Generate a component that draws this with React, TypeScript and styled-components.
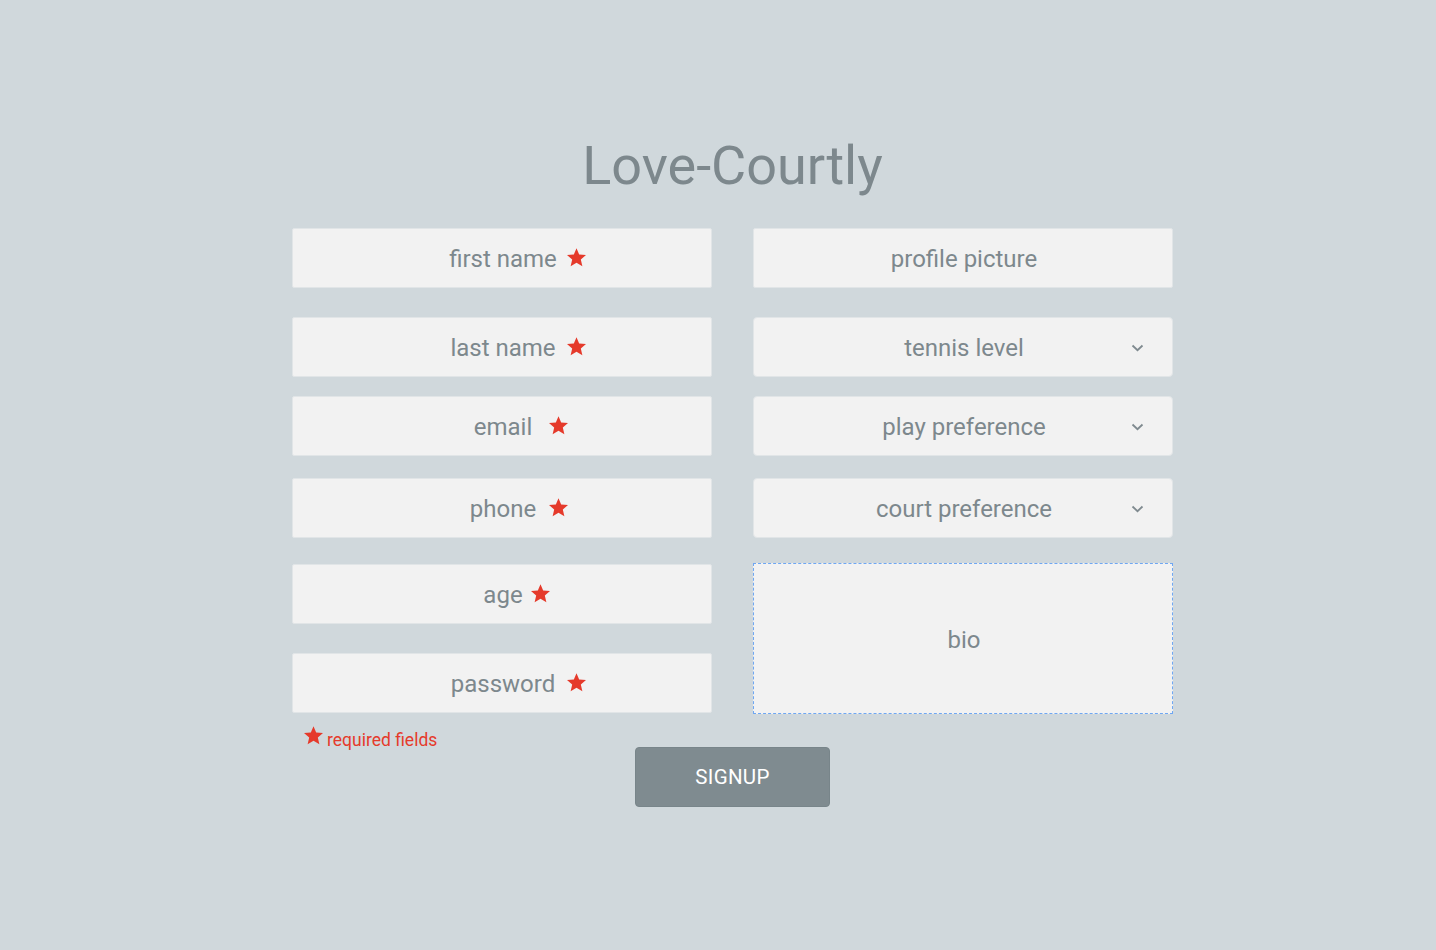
import React from "react";
import styled, { createGlobalStyle } from "styled-components";

const Global = createGlobalStyle`
  html, body { margin: 0; padding: 0; background: #d0d8dc; }
  body { font-family: Roboto, "Liberation Sans", Arial, sans-serif; }
`;

const Page = styled.div`
  min-height: 950px;
  box-sizing: border-box;
  padding: 134px 0 0 29px;
  display: flex;
  flex-direction: column;
  align-items: center;
`;

const Title = styled.h1`
  margin: 0;
  font-family: Roboto, "Liberation Sans", sans-serif;
  font-weight: 400;
  font-size: 54px;
  line-height: 63px;
  color: #7d888d;
`;

const Form = styled.form`
  margin-top: 31px;
  width: 881px;
  display: flex;
  flex-direction: column;
  align-items: center;
`;

const Columns = styled.div`
  width: 100%;
  display: flex;
  gap: 41px;
  align-items: flex-start;
`;

const Column = styled.div`
  width: 420px;
  display: flex;
  flex-direction: column;
`;

const Field = styled.div<{ $top?: number; $round?: number }>`
  position: relative;
  box-sizing: border-box;
  height: 60px;
  margin-top: ${(p) => p.$top ?? 0}px;
  background: #f2f2f2;
  border: 1px solid #e1e5e7;
  border-radius: ${(p) => p.$round ?? 2}px;
  display: flex;
  align-items: center;
  justify-content: center;
  font-size: 24px;
  color: #7d888d;
`;

const Label = styled.span`
  line-height: 28px;
  padding-top: 2px;
  padding-left: 2px;
`;

const Star = styled.svg<{ $x: number }>`
  position: absolute;
  left: ${(p) => p.$x}px;
  top: 19px;
  width: 19px;
  height: 19px;
`;

const Chevron = styled.svg`
  position: absolute;
  right: 28px;
  top: 26px;
  width: 13px;
  height: 8px;
`;

const Bio = styled.div<{ $top: number }>`
  box-sizing: border-box;
  height: 151px;
  margin-top: ${(p) => p.$top}px;
  background: #f2f2f2;
  border: 1px dashed #6fa7f2;
  display: flex;
  align-items: center;
  justify-content: center;
  font-size: 24px;
  color: #7d888d;
  padding-top: 2px;
  padding-left: 2px;
`;

const Note = styled.div`
  margin-top: 13px;
  margin-left: 12px;
  height: 21px;
  display: flex;
  align-items: flex-start;
  gap: 4px;
  color: #e53a2b;
  font-size: 17.5px;
`;

const NoteText = styled.span`
  line-height: 22px;
  padding-top: 3px;
`;

const NoteStar = styled.svg`
  width: 19px;
  height: 19px;
  flex: none;
`;

const Button = styled.button`
  margin-top: 0;
  width: 195px;
  height: 60px;
  border: 1px solid #78858a;
  border-radius: 4px;
  background: #7f8b90;
  color: #ffffff;
  font-family: Roboto, "Liberation Sans", sans-serif;
  font-size: 20.5px;
  letter-spacing: 0.3px;
  cursor: pointer;
`;

const starPath =
  "M12 17.27L18.18 21l-1.64-7.03L22 9.24l-7.19-.61L12 2 9.19 8.63 2 9.24l5.46 4.73L5.82 21z";

const StarIcon: React.FC<{ x: number }> = ({ x }) => (
  <Star $x={x} viewBox="2 2 20 19.5">
    <path d={starPath} fill="#e53a2b" />
  </Star>
);

const ChevronIcon = () => (
  <Chevron viewBox="0 0 13 8">
    <polyline points="1.5,1.5 6.5,6.2 11.5,1.5" fill="none" stroke="#7f8a8f" strokeWidth="1.8" />
  </Chevron>
);

const left = [
  { label: "first name", top: 0, star: 274 },
  { label: "last name", top: 29, star: 274 },
  { label: "email", top: 19, star: 256 },
  { label: "phone", top: 22, star: 256 },
  { label: "age", top: 26, star: 238 },
  { label: "password", top: 29, star: 274 },
];

const selects = [
  { label: "tennis level", top: 29 },
  { label: "play preference", top: 19 },
  { label: "court preference", top: 22 },
];

export default function App() {
  return (
    <>
      <Global />
      <Page>
        <Title>Love-Courtly</Title>
        <Form onSubmit={(e) => e.preventDefault()}>
          <Columns>
            <Column>
              {left.map((f) => (
                <Field key={f.label} $top={f.top}>
                  <Label>{f.label}</Label>
                  <StarIcon x={f.star} />
                </Field>
              ))}
              <Note>
                <NoteStar viewBox="2 2 20 19.5">
                  <path d={starPath} fill="#e53a2b" />
                </NoteStar>
                <NoteText>required fields</NoteText>
              </Note>
            </Column>
            <Column>
              <Field>
                <Label>profile picture</Label>
              </Field>
              {selects.map((s) => (
                <Field key={s.label} $top={s.top} $round={4}>
                  <Label>{s.label}</Label>
                  <ChevronIcon />
                </Field>
              ))}
              <Bio $top={25}>bio</Bio>
            </Column>
          </Columns>
          <Button type="submit">SIGNUP</Button>
        </Form>
      </Page>
    </>
  );
}
